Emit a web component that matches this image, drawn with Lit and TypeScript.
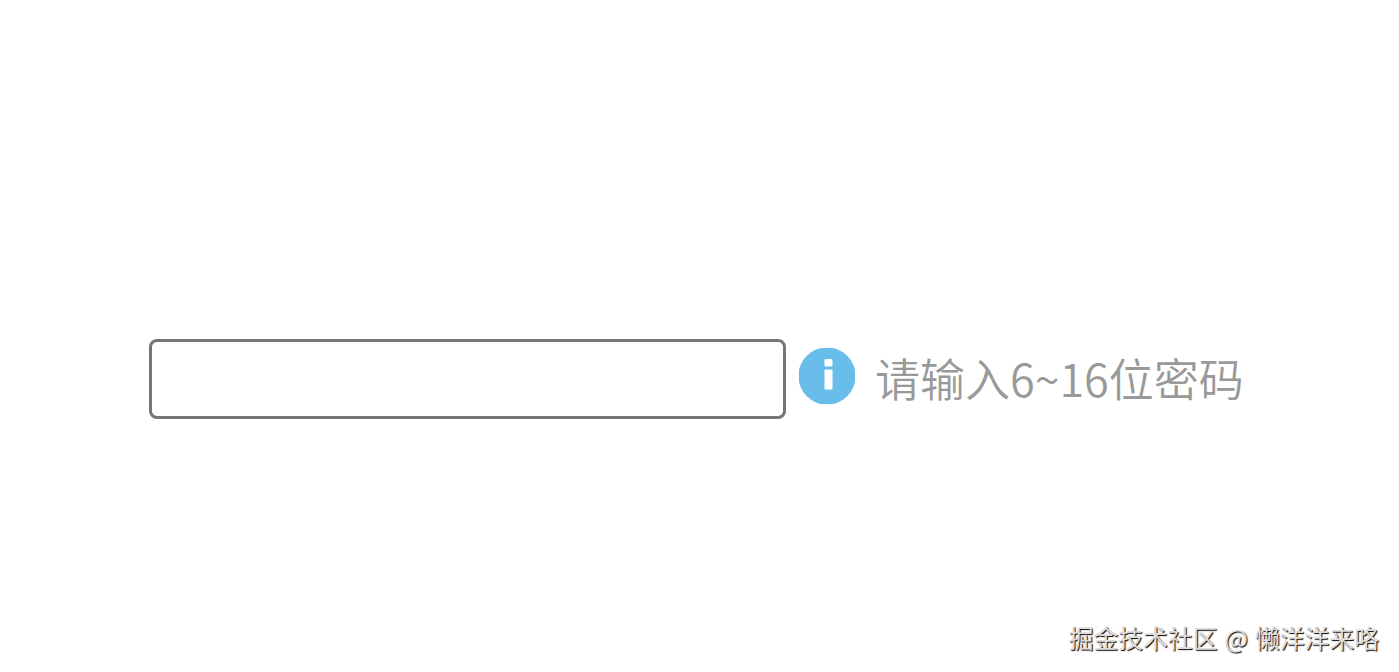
import {css, html, LitElement} from 'lit';
import {customElement, property} from 'lit/decorators.js';

@customElement('info-icon')
export class InfoIconElement extends LitElement {

  static styles = css`
    :host {
      display: block;
      flex: none;
      height: 56px;
      width: 56px;
    }

    .icon {
      display: block;
      height: 100%;
      width: 100%;
    }

    .disc {
      fill: #69bdeb;
    }

    .mark {
      fill: #fff;
    }
  `;

  render() {
    return html`
      <svg class="icon" viewBox="0 0 56 56" aria-hidden="true">
        <circle class="disc" cx="28" cy="28" r="28.6"></circle>
        <rect class="mark" x="25.5" y="11" width="8" height="7.5" rx="1.5"></rect>
        <rect class="mark" x="25.5" y="21.5" width="8" height="20" rx="1"></rect>
      </svg>
    `;
  }
}

@customElement('password-field')
export class PasswordFieldElement extends LitElement {

  static styles = css`
    :host {
      display: flex;
    }

    .input {
      background: #fff;
      border: 3px solid #767676;
      border-radius: 8px;
      box-sizing: border-box;
      font-size: 40px;
      height: 80px;
      margin: 0;
      outline: none;
      padding: 3px 6px;
      width: 637px;
    }

    .icon {
      margin: 9px 0 0 13px;
    }

    .hint {
      color: #999;
      font-family: "Noto Sans CJK SC", sans-serif;
      font-size: 45px;
      font-weight: 350;
      line-height: 78px;
      margin-left: 20px;
      white-space: nowrap;
    }
  `;

  @property() hint = '';

  render() {
    return html`
      <input class="input" type="password" aria-label=${this.hint}>
      <info-icon class="icon"></info-icon>
      <span class="hint">${this.hint}</span>
    `;
  }
}

@customElement('app-root')
export class AppRootElement extends LitElement {

  static styles = css`
    :host {
      background: #fff;
      box-sizing: border-box;
      display: flex;
      flex-direction: column;
      height: 672px;
      justify-content: space-between;
      overflow: hidden;
      padding: 339px 20px 17px 149px;
    }

    .credit {
      align-self: flex-end;
      color: #ddd;
      font-family: "Noto Sans CJK SC", sans-serif;
      font-size: 24.8px;
      line-height: 36px;
      text-shadow: 1px 1px 1px #000;
      white-space: nowrap;
      word-spacing: 1.5px;
    }
  `;

  render() {
    return html`
      <password-field hint="请输入6~16位密码"></password-field>
      <div class="credit">掘金技术社区 @ 懒洋洋来咯</div>
    `;
  }
}
